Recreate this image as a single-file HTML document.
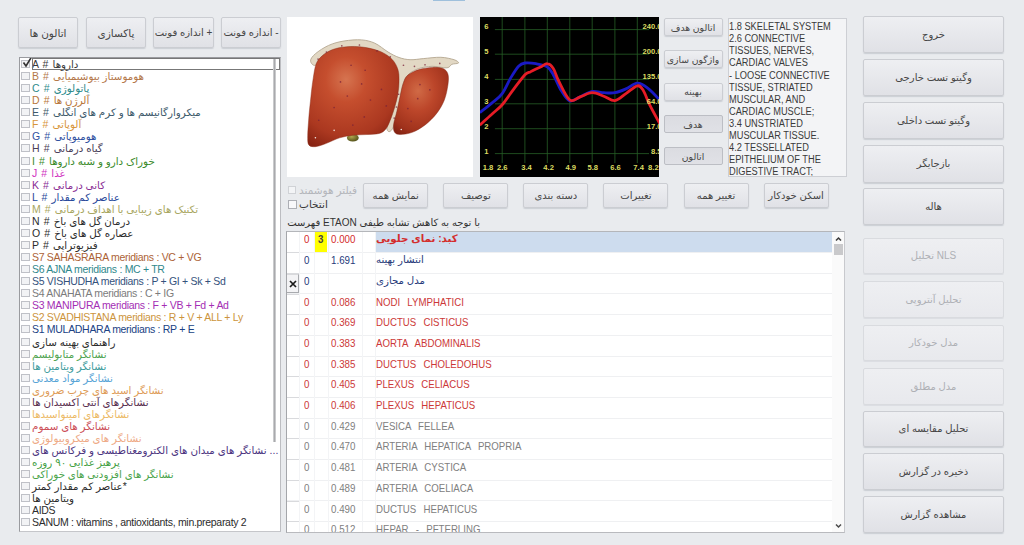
<!DOCTYPE html><html lang="fa"><head><meta charset="utf-8"><title>NLS</title><style>
*{box-sizing:border-box;margin:0;padding:0}
html,body{width:1024px;height:545px;overflow:hidden;background:#e9ebee;}
body{position:relative;font-family:"Liberation Sans","DejaVu Sans",sans-serif;font-size:11px;color:#333;}
.abs{position:absolute}
.btn{position:absolute;border:1px solid #cbcdd2;border-radius:2px;background:linear-gradient(#eeeff2 0%,#e7e8ec 50%,#e0e1e6 100%);box-shadow:0 1px 1px rgba(130,135,150,.28);display:flex;align-items:center;justify-content:center;direction:rtl;color:#464646;font-size:11px;white-space:nowrap}
.btn.dis{color:#aeb0b5;border-color:#d9dbdf;background:linear-gradient(#eeeff2,#e8e9ed);box-shadow:0 1px 0 rgba(130,135,150,.12)}
.btn.pressed{background:linear-gradient(#dbdce1,#e0e1e6);border-color:#bcbec4;box-shadow:none}
#list{position:absolute;left:19px;top:57px;width:262px;height:475px;background:#fff;border:1px solid #9a9b9f;border-right-color:#bcbdc1;border-bottom-color:#c5c6ca;overflow:hidden}
.li{position:absolute;left:0;height:12px;line-height:12px;white-space:nowrap;font-size:10.5px;width:300px}
.li i{position:absolute;left:1px;top:2px;width:9px;height:8px;border:1px solid #bfc1c7;background:#f2f3f5;display:block}
.li span{position:absolute;left:12px;top:0;letter-spacing:-0.3px}
.li span.p{letter-spacing:0;word-spacing:1.2px}
.row{left:0;width:545px;height:20.7px;border-bottom:1px solid #eff0f2;font-size:10.5px;line-height:14px;white-space:nowrap}
.row span{top:0}
.row .n{transform:scaleX(.93);transform-origin:0 0}
.row .t{white-space:pre;word-spacing:1px;transform:scaleX(.92);transform-origin:0 0}
.a{font-weight:normal;font-size:10.3px;letter-spacing:0;word-spacing:0}
</style></head><body>
<div class="abs" style="left:433px;top:0;width:32px;height:1px;background:#9fc0dc"></div>
<div class="btn" style="left:18px;top:17px;width:60px;height:31px;font-size:10.5px">اتالون ها</div>
<div class="btn" style="left:86px;top:17px;width:60px;height:31px;font-size:10.5px">پاکسازی</div>
<div class="btn" style="left:153px;top:17px;width:61px;height:31px;font-size:10px">+ اندازه فونت</div>
<div class="btn" style="left:221px;top:17px;width:60px;height:31px;font-size:10px">- اندازه فونت</div>
<div id="list">
<div class="li" style="top:0.0px;color:#3a3a3a"><i></i><svg style="position:absolute;left:2px;top:-2px" width="11" height="12" viewBox="0 0 11 12"><path d="M1.5 6.5 L4 10 L9.5 1" fill="none" stroke="#333" stroke-width="1.6"/></svg><span class="p">A # <b class="a">داروها</b></span></div>
<div class="li" style="top:12.06px;color:#b4784a"><i></i><span class="p">B # <b class="a">هوموستاز بیوشیمیایی</b></span></div>
<div class="li" style="top:24.13px;color:#2e8b8b"><i></i><span class="p">C # <b class="a">پاتولوژی</b></span></div>
<div class="li" style="top:36.2px;color:#b8763a"><i></i><span class="p">D # <b class="a">آلرژن ها</b></span></div>
<div class="li" style="top:48.26px;color:#3d5a6b"><i></i><span class="p">E # <b class="a">میکروارگانیسم ها و کرم های انگلی</b></span></div>
<div class="li" style="top:60.32px;color:#d8953a"><i></i><span class="p">F # <b class="a">آلوپاتی</b></span></div>
<div class="li" style="top:72.39px;color:#3050a0"><i></i><span class="p">G # <b class="a">هومیوپاتی</b></span></div>
<div class="li" style="top:84.45px;color:#4a4058"><i></i><span class="p">H # <b class="a">گیاه درمانی</b></span></div>
<div class="li" style="top:96.52px;color:#3a8a2a"><i></i><span class="p">I # <b class="a">خوراک دارو و شبه داروها</b></span></div>
<div class="li" style="top:108.58px;color:#d030c0"><i></i><span class="p">J # <b class="a">غذا</b></span></div>
<div class="li" style="top:120.65px;color:#8a2c94"><i></i><span class="p">K # <b class="a">کانی درمانی</b></span></div>
<div class="li" style="top:132.72px;color:#28489a"><i></i><span class="p">L # <b class="a">عناصر کم مقدار</b></span></div>
<div class="li" style="top:144.78px;color:#a8a660"><i></i><span class="p">M # <b class="a">تکنیک های زیبایی با اهداف درمانی</b></span></div>
<div class="li" style="top:156.84px;color:#2c2c2c"><i></i><span class="p">N # <b class="a">درمان گل های باخ</b></span></div>
<div class="li" style="top:168.91px;color:#2c2c2c"><i></i><span class="p">O # <b class="a">عصاره گل های باخ</b></span></div>
<div class="li" style="top:180.97px;color:#2c2c2c"><i></i><span class="p">P # <b class="a">فیزیوتراپی</b></span></div>
<div class="li" style="top:193.04px;color:#ac6236"><i></i><span>S7 SAHASRARA meridians : VC + VG</span></div>
<div class="li" style="top:205.1px;color:#30888c"><i></i><span>S6 AJNA meridians : MC + TR</span></div>
<div class="li" style="top:217.17px;color:#34527c"><i></i><span>S5 VISHUDHA meridians : P + GI + Sk + Sd</span></div>
<div class="li" style="top:229.23px;color:#7c7c7c"><i></i><span>S4 ANAHATA meridians : C + IG</span></div>
<div class="li" style="top:241.3px;color:#a42eb4"><i></i><span>S3 MANIPURA meridians : F + VB + Fd + Ad</span></div>
<div class="li" style="top:253.36px;color:#cc943c"><i></i><span>S2 SVADHISTANA meridians : R + V + ALL + Ly</span></div>
<div class="li" style="top:265.43px;color:#204284"><i></i><span>S1 MULADHARA meridians : RP + E</span></div>
<div class="li" style="top:277.5px;color:#2c2c2c"><i></i><span><b class="a">راهنمای بهینه سازی</b></span></div>
<div class="li" style="top:289.56px;color:#50a450"><i></i><span><b class="a">نشانگر متابولیسم</b></span></div>
<div class="li" style="top:301.62px;color:#409c9c"><i></i><span><b class="a">نشانگر ویتامین ها</b></span></div>
<div class="li" style="top:313.69px;color:#58a4d6"><i></i><span><b class="a">نشانگر مواد معدنی</b></span></div>
<div class="li" style="top:325.75px;color:#de9c58"><i></i><span><b class="a">نشانگر اسید های چرب ضروری</b></span></div>
<div class="li" style="top:337.82px;color:#5a3050"><i></i><span><b class="a">نشانگرهای آنتی اکسیدان ها</b></span></div>
<div class="li" style="top:349.88px;color:#ecba66"><i></i><span><b class="a">نشانگرهای آمینواسیدها</b></span></div>
<div class="li" style="top:361.95px;color:#cc5058"><i></i><span><b class="a">نشانگر های سموم</b></span></div>
<div class="li" style="top:374.01px;color:#eeaa86"><i></i><span><b class="a">نشانگر های میکروبیولوژی</b></span></div>
<div class="li" style="top:386.08px;color:#4c3480"><i></i><span><b class="a">نشانگر های میدان های الکترومغناطیسی و فرکانس های</b> ...</span></div>
<div class="li" style="top:398.14px;color:#44a044"><i></i><span><b class="a">پرهیز غذایی ۹۰ روزه</b></span></div>
<div class="li" style="top:410.21px;color:#4ca44c"><i></i><span><b class="a">نشانگر های افزودنی های خوراکی</b></span></div>
<div class="li" style="top:422.27px;color:#2c2c2c"><i></i><span><b class="a">عناصر کم مقدار کمتر</b>*</span></div>
<div class="li" style="top:434.34px;color:#2c2c2c"><i></i><span><b class="a">ویتامین ها</b></span></div>
<div class="li" style="top:446.4px;color:#2c2c2c"><i></i><span>AIDS</span></div>
<div class="li" style="top:458.47px;color:#2c2c2c"><i></i><span>SANUM : vitamins , antioxidants, min.preparaty 2</span></div>
<div class="li" style="top:470.53px;color:#2c2c2c"><i></i><span></span></div>
<div class="abs" style="left:12px;top:0;width:248px;height:12px;border:1px solid #777"></div>
<div class="abs" style="left:252.5px;top:1px;width:3px;height:383px;background:#a9aaad;border-left:.5px solid #c9cacc;border-right:.5px solid #c9cacc"></div>
</div>
<div class="abs" id="img" style="left:287px;top:17px;width:186px;height:160px;background:#fff"><svg class="abs" style="left:0;top:0" width="186" height="160" viewBox="0 0 186 160"><defs><radialGradient id="g1" cx="0.42" cy="0.33" r="0.75"><stop offset="0" stop-color="#d67450"/><stop offset="0.3" stop-color="#c54e2e"/><stop offset="0.75" stop-color="#ab3820"/><stop offset="1" stop-color="#882312"/></radialGradient><radialGradient id="g2" cx="0.45" cy="0.35" r="0.75"><stop offset="0" stop-color="#d06a46"/><stop offset="0.4" stop-color="#bc462a"/><stop offset="0.8" stop-color="#a0321c"/><stop offset="1" stop-color="#802010"/></radialGradient><radialGradient id="g3" cx="0.4" cy="0.35" r="0.7"><stop offset="0" stop-color="#b0a850"/><stop offset="1" stop-color="#4c4a14"/></radialGradient><filter id="bl" x="-5%" y="-5%" width="110%" height="110%"><feGaussianBlur stdDeviation="1.2"/></filter></defs><g transform="translate(13,13) scale(0.2201)"><path d="M48 140C48 131 56 120 70 108C84 96 108 80 130 70C152 60 175 54 200 50C225 46 257 43 280 45C303 47 320 51 340 60C360 69 382 89 400 100C418 111 433 119 450 125C467 131 482 134 500 135C518 136 537 132 560 130C583 128 617 123 640 124C663 125 687 131 700 135C713 139 722 146 720 150C718 154 699 152 690 156C681 160 683 170 668 172C653 174 621 164 600 165C579 166 558 169 540 175C522 181 507 189 495 200C483 211 477 222 470 240C463 258 460 287 455 310C450 333 445 358 440 380C435 402 431 426 425 440C419 454 410 462 405 462C400 462 392 454 395 440C398 426 412 403 420 380C428 357 436 330 440 300C444 270 452 228 445 200C438 172 424 149 400 130C376 111 333 93 300 85C267 77 232 76 200 80C168 84 132 97 110 110C88 123 80 155 70 160C60 165 48 149 48 140Z" fill="#e2d8c4" stroke="#b3a58e" stroke-width="4"/><ellipse cx="240" cy="490" rx="27" ry="17" fill="url(#g3)"/><path d="M75 150C83 132 96 121 110 110C124 99 140 91 160 85C180 79 207 76 230 75C253 74 277 76 300 80C323 84 350 91 370 100C390 109 408 122 420 135C432 148 440 164 445 180C450 196 450 212 450 230C450 248 448 270 445 290C442 310 436 330 430 350C424 370 417 393 410 410C403 427 398 440 390 450C382 460 375 466 360 470C345 474 320 474 300 475C280 476 260 476 240 478C220 480 200 484 180 490C160 496 138 508 120 515C102 522 83 529 70 530C57 531 46 530 40 522C34 514 35 500 35 480C35 460 38 430 40 400C42 370 47 330 50 300C53 270 56 245 60 220C64 195 67 168 75 150Z" fill="url(#g1)" stroke="#8a2c18" stroke-width="2"/><path d="M470 240C476 224 478 215 490 205C502 195 522 186 540 180C558 174 582 171 600 170C618 169 638 170 650 175C662 180 668 188 672 200C676 212 675 230 672 250C669 270 664 298 655 320C646 342 634 362 620 380C606 398 588 416 570 430C552 444 529 458 510 465C491 472 468 475 455 475C442 475 435 472 430 465C425 458 423 446 425 430C427 414 435 392 440 370C445 348 450 322 455 300C460 278 464 256 470 240Z" fill="url(#g2)" stroke="#832814" stroke-width="2"/><circle cx="232" cy="160" r="3.8" fill="#7a2238" opacity=".75"/><circle cx="296" cy="183" r="3.8" fill="#7a2238" opacity=".75"/><circle cx="184" cy="236" r="3.8" fill="#7a2238" opacity=".75"/><circle cx="280" cy="245" r="3.8" fill="#7a2238" opacity=".75"/><circle cx="370" cy="270" r="3.8" fill="#7a2238" opacity=".75"/><circle cx="215" cy="300" r="3.8" fill="#7a2238" opacity=".75"/><circle cx="320" cy="318" r="3.8" fill="#7a2238" opacity=".75"/><circle cx="155" cy="352" r="3.8" fill="#7a2238" opacity=".75"/><circle cx="392" cy="345" r="3.8" fill="#7a2238" opacity=".75"/><circle cx="85" cy="410" r="3.8" fill="#7a2238" opacity=".75"/><circle cx="240" cy="432" r="3.8" fill="#7a2238" opacity=".75"/><circle cx="292" cy="395" r="3.8" fill="#7a2238" opacity=".75"/><circle cx="545" cy="248" r="3.8" fill="#7a2238" opacity=".75"/><circle cx="590" cy="272" r="3.8" fill="#7a2238" opacity=".75"/><circle cx="535" cy="312" r="3.8" fill="#7a2238" opacity=".75"/><circle cx="490" cy="357" r="3.8" fill="#7a2238" opacity=".75"/><circle cx="505" cy="415" r="3.8" fill="#7a2238" opacity=".75"/><circle cx="470" cy="160" r="3.8" fill="#7a2238" opacity=".75"/><circle cx="520" cy="165" r="3.8" fill="#7a2238" opacity=".75"/><circle cx="568" cy="158" r="3.8" fill="#7a2238" opacity=".75"/><circle cx="635" cy="152" r="3.8" fill="#7a2238" opacity=".75"/><circle cx="350" cy="95" r="3.8" fill="#7a2238" opacity=".75"/><circle cx="410" cy="122" r="3.8" fill="#7a2238" opacity=".75"/><circle cx="270" cy="68" r="3.8" fill="#7a2238" opacity=".75"/><circle cx="190" cy="72" r="3.8" fill="#7a2238" opacity=".75"/><circle cx="120" cy="100" r="3.8" fill="#7a2238" opacity=".75"/><circle cx="82" cy="132" r="3.8" fill="#7a2238" opacity=".75"/><circle cx="448" cy="292" r="3.8" fill="#7a2238" opacity=".75"/><circle cx="438" cy="350" r="3.8" fill="#7a2238" opacity=".75"/><circle cx="428" cy="400" r="3.8" fill="#7a2238" opacity=".75"/><circle cx="70" cy="490" r="3.5" fill="#f4eee8"/><circle cx="155" cy="456" r="3.5" fill="#f4eee8"/><circle cx="460" cy="452" r="3.5" fill="#f4eee8"/></g></svg></div>
<div class="abs" id="chart" style="left:480px;top:17px;width:179px;height:160px;background:#000;overflow:hidden"><svg class="abs" style="left:0;top:0" width="180" height="160" viewBox="0 0 180 160" font-family="'Liberation Sans',sans-serif" font-size="7.6" font-weight="bold" fill="#dcdc62"><path d="M22.2 0V146.1M44.9 0V146.1M67.3 0V146.1M89.8 0V146.1M112.2 0V146.1M134.9 0V146.1M157.3 0V146.1M14.9 12.6H169.0M14.9 37.2H169.0M14.9 62.4H169.0M14.9 86.8H169.0M14.9 111.7H169.0M14.9 136.6H169.0" stroke="#265e26" stroke-width="0.8" fill="none"/><path d="M-0.2 95.6C1.8 94.0 8.0 89.3 11.8 86.1C15.5 83.0 19.0 80.9 22.2 76.6C25.4 72.4 28.0 65.4 30.7 60.9C33.5 56.3 36.2 51.7 38.6 49.2C41.0 46.7 42.0 46.5 44.9 46.0C47.8 45.6 52.2 46.0 56.0 46.7C59.7 47.3 64.4 48.0 67.3 49.8C70.2 51.7 71.0 53.8 73.3 57.7C75.7 61.7 78.5 69.1 81.2 73.5C84.0 77.9 86.6 82.9 89.8 83.9C92.9 85.0 96.4 81.4 100.2 79.8C103.9 78.2 108.2 75.1 112.2 74.4C116.1 73.8 120.1 75.5 123.8 75.7C127.6 75.9 131.2 76.3 134.9 75.7C138.6 75.1 142.2 73.5 145.9 71.9C149.7 70.3 153.6 66.3 157.3 66.2C161.0 66.1 164.3 68.5 168.0 71.3C171.8 74.1 177.8 81.0 179.7 83.0" stroke="#1a1ac4" stroke-width="2.8" fill="none" stroke-linejoin="round"/><path d="M-0.2 108.2C1.8 106.4 8.0 100.6 11.8 97.2C15.5 93.7 18.5 91.9 22.2 87.7C25.9 83.5 30.1 76.9 33.9 71.9C37.7 66.9 42.2 60.6 44.9 57.7C47.7 54.9 48.5 55.8 50.3 54.9C52.1 53.9 54.1 52.9 56.0 52.0C57.9 51.1 59.8 50.4 61.7 49.5C63.6 48.6 65.4 46.3 67.3 46.7C69.3 47.0 71.4 48.5 73.3 51.4C75.2 54.3 76.0 58.8 78.7 64.0C81.4 69.3 86.2 80.3 89.8 83.0C93.3 85.6 96.4 81.0 100.2 79.8C103.9 78.6 108.2 75.8 112.2 75.7C116.1 75.6 120.1 77.9 123.8 79.2C127.6 80.5 131.2 84.0 134.9 83.6C138.6 83.2 142.2 79.1 145.9 76.6C149.7 74.2 154.4 69.3 157.3 68.8C160.2 68.2 161.2 70.3 163.3 73.5C165.3 76.6 166.9 82.2 169.6 87.7C172.3 93.2 178.0 103.5 179.7 106.6" stroke="#e61c26" stroke-width="2.8" fill="none" stroke-linejoin="round"/><text x="6.4" y="12.1" text-anchor="middle">6</text><text x="6.4" y="36.7" text-anchor="middle">5</text><text x="6.4" y="62.0" text-anchor="middle">4</text><text x="6.4" y="86.6" text-anchor="middle">3</text><text x="6.4" y="111.9" text-anchor="middle">2</text><text x="6.4" y="136.8" text-anchor="middle">1</text><text x="181.5" y="12.1" text-anchor="end">240.0</text><text x="181.5" y="37.4" text-anchor="end">200.0</text><text x="181.5" y="62.0" text-anchor="end">135.0</text><text x="181.5" y="86.6" text-anchor="end">64.0</text><text x="181.5" y="111.9" text-anchor="end">17.0</text><text x="181.5" y="136.8" text-anchor="end">8.5</text><text x="8.0" y="152.6" text-anchor="middle">1.8</text><text x="22.2" y="152.6" text-anchor="middle">2.6</text><text x="46.5" y="152.6" text-anchor="middle">3.4</text><text x="68.6" y="152.6" text-anchor="middle">4.2</text><text x="90.7" y="152.6" text-anchor="middle">4.9</text><text x="112.8" y="152.6" text-anchor="middle">5.8</text><text x="135.5" y="152.6" text-anchor="middle">6.6</text><text x="158.6" y="152.6" text-anchor="middle">7.4</text><text x="173.4" y="152.6" text-anchor="middle">8.2</text></svg></div>
<div class="btn" style="left:663.5px;top:18px;width:59px;height:18px;font-size:9.3px">اتالون هدف</div>
<div class="btn" style="left:663.5px;top:50px;width:59px;height:18px;font-size:9.3px">واژگون سازی</div>
<div class="btn" style="left:663.5px;top:82.5px;width:59px;height:18px;font-size:9.3px">بهینه</div>
<div class="btn pressed" style="left:663.5px;top:115px;width:59px;height:18px;font-size:9.3px">هدف</div>
<div class="btn pressed" style="left:663.5px;top:147px;width:59px;height:18px;font-size:9.3px">اتالون</div>
<div class="abs" id="tb" style="left:727.5px;top:17.5px;width:119px;height:159.5px;background:#f3f4f6;border:1px solid #cdcfd4;line-height:12.07px;font-size:10px;color:#3a3a3a;white-space:nowrap;overflow:hidden"><div style="position:absolute;left:0.5px;top:2.8px;transform:scaleX(.925);transform-origin:0 0">1.8 SKELETAL SYSTEM<br>2.6 CONNECTIVE<br>TISSUES, NERVES,<br>CARDIAC VALVES<br>- LOOSE CONNECTIVE<br>TISSUE, STRIATED<br>MUSCULAR, AND<br>CARDIAC MUSCLE;<br>3.4 UNSTRIATED<br>MUSCULAR TISSUE.<br>4.2 TESSELLATED<br>EPITHELIUM OF THE<br>DIGESTIVE TRACT;</div></div>
<div class="btn" style="left:863px;top:16px;width:141px;height:36.5px;font-size:10px">خروج</div>
<div class="btn" style="left:863px;top:59px;width:141px;height:37px;font-size:10px">وگیتو تست خارجی</div>
<div class="btn" style="left:863px;top:101.5px;width:141px;height:37px;font-size:10px">وگیتو تست داخلی</div>
<div class="btn" style="left:863px;top:144.5px;width:141px;height:38.5px;font-size:10px">بازجایگر</div>
<div class="btn" style="left:863px;top:187.5px;width:141px;height:37px;font-size:10px">هاله</div>
<div class="btn dis" style="left:863px;top:237.5px;width:141px;height:36.5px;font-size:10px">NLS تحلیل</div>
<div class="btn dis" style="left:863px;top:280.5px;width:141px;height:37.3px;font-size:10px">تحلیل آنتروپی</div>
<div class="btn dis" style="left:863px;top:324.5px;width:141px;height:36.5px;font-size:10px">مدل خودکار</div>
<div class="btn dis" style="left:863px;top:367.5px;width:141px;height:37px;font-size:10px">مدل مطلق</div>
<div class="btn" style="left:863px;top:410.5px;width:141px;height:36.5px;font-size:10px">تحلیل مقایسه ای</div>
<div class="btn" style="left:863px;top:453px;width:141px;height:36.5px;font-size:10px">ذخیره در گزارش</div>
<div class="btn" style="left:863px;top:495.5px;width:141px;height:37px;font-size:10px">مشاهده گزارش</div>
<div class="btn" style="left:363.2px;top:183px;width:65px;height:24.5px;font-size:10px">نمایش همه</div>
<div class="btn" style="left:443.3px;top:183px;width:65px;height:24.5px;font-size:10px">توصیف</div>
<div class="btn" style="left:523.4px;top:183px;width:65px;height:24.5px;font-size:10px">دسته بندی</div>
<div class="btn" style="left:603.4px;top:183px;width:65px;height:24.5px;font-size:10px">تغییرات</div>
<div class="btn" style="left:683.5px;top:183px;width:65px;height:24.5px;font-size:10px">تغییر همه</div>
<div class="btn" style="left:763.6px;top:183px;width:65px;height:24.5px;font-size:10px">اسکن خودکار</div>
<div class="abs" style="left:288px;top:186px;width:8px;height:8px;border:1px solid #d0d2d6;background:#f3f4f6"></div>
<div class="abs" style="left:299px;top:184px;line-height:12px;font-size:10.5px;color:#b4b6bb;white-space:nowrap">فیلتر هوشمند</div>
<div class="abs" style="left:288px;top:199.5px;width:9px;height:9px;border:1px solid #adafb5;background:#f8f8fa"></div>
<div class="abs" style="left:299px;top:198px;line-height:12px;font-size:10.5px;color:#3a3a3a;white-space:nowrap">انتخاب</div>
<div class="abs" id="lbl" style="left:280px;top:216px;width:200px;line-height:13px;font-size:10px;color:#333;white-space:nowrap;direction:rtl;text-align:right">با توجه به کاهش تشابه طیفی ETAON فهرست</div>
<div class="abs" id="tbl" style="left:286px;top:231px;width:559px;height:302px;background:#fff;border:1px solid #a4a6aa;border-right-color:#c8c9cd;border-top-color:#b4b6ba;border-bottom-color:#b9babe;overflow:hidden">
<div class="abs row" style="top:0.4px;color:#d42c2c">
<div class="abs" style="left:89px;top:0;width:456px;height:20px;background:#cddcee"></div>
<div class="abs" style="left:27.5px;top:0;width:12.5px;height:20px;background:#ffff00"></div>
<span class="abs n" style="left:16.5px">0</span>
<span class="abs n" style="left:31px;color:#444;font-weight:bold">3</span>
<span class="abs n" style="left:44px">0.000</span>
<span class="abs" style="left:89px;font-weight:bold;font-size:10.3px;">کبد: نمای جلویی</span>
</div>
<div class="abs row" style="top:21.1px;color:#263a7a">
<span class="abs n" style="left:16.5px">0</span>
<span class="abs n" style="left:44px">1.691</span>
<span class="abs" style="left:89px;font-size:10.2px;">انتشار بهینه</span>
</div>
<div class="abs row" style="top:41.8px;color:#263a7a">
<span class="abs n" style="left:16.5px">0</span>
<span class="abs" style="left:89px;font-size:10.2px;">مدل مجازی</span>
</div>
<div class="abs row" style="top:62.5px;color:#cc3838">
<span class="abs n" style="left:16.5px">0</span>
<span class="abs n" style="left:44px">0.086</span>
<span class="abs t" style="left:89px">NODI  LYMPHATICI</span>
</div>
<div class="abs row" style="top:83.2px;color:#cc3838">
<span class="abs n" style="left:16.5px">0</span>
<span class="abs n" style="left:44px">0.369</span>
<span class="abs t" style="left:89px">DUCTUS  CISTICUS</span>
</div>
<div class="abs row" style="top:103.9px;color:#cc3838">
<span class="abs n" style="left:16.5px">0</span>
<span class="abs n" style="left:44px">0.383</span>
<span class="abs t" style="left:89px">AORTA  ABDOMINALIS</span>
</div>
<div class="abs row" style="top:124.6px;color:#cc3838">
<span class="abs n" style="left:16.5px">0</span>
<span class="abs n" style="left:44px">0.385</span>
<span class="abs t" style="left:89px">DUCTUS  CHOLEDOHUS</span>
</div>
<div class="abs row" style="top:145.3px;color:#cc3838">
<span class="abs n" style="left:16.5px">0</span>
<span class="abs n" style="left:44px">0.405</span>
<span class="abs t" style="left:89px">PLEXUS  CELIACUS</span>
</div>
<div class="abs row" style="top:166.0px;color:#cc3838">
<span class="abs n" style="left:16.5px">0</span>
<span class="abs n" style="left:44px">0.406</span>
<span class="abs t" style="left:89px">PLEXUS  HEPATICUS</span>
</div>
<div class="abs row" style="top:186.7px;color:#808080">
<span class="abs n" style="left:16.5px">0</span>
<span class="abs n" style="left:44px">0.429</span>
<span class="abs t" style="left:89px">VESICA  FELLEA</span>
</div>
<div class="abs row" style="top:207.4px;color:#808080">
<span class="abs n" style="left:16.5px">0</span>
<span class="abs n" style="left:44px">0.470</span>
<span class="abs t" style="left:89px">ARTERIA  HEPATICA  PROPRIA</span>
</div>
<div class="abs row" style="top:228.1px;color:#808080">
<span class="abs n" style="left:16.5px">0</span>
<span class="abs n" style="left:44px">0.481</span>
<span class="abs t" style="left:89px">ARTERIA  CYSTICA</span>
</div>
<div class="abs row" style="top:248.8px;color:#808080">
<span class="abs n" style="left:16.5px">0</span>
<span class="abs n" style="left:44px">0.489</span>
<span class="abs t" style="left:89px">ARTERIA  COELIACA</span>
</div>
<div class="abs row" style="top:269.5px;color:#808080">
<span class="abs n" style="left:16.5px">0</span>
<span class="abs n" style="left:44px">0.490</span>
<span class="abs t" style="left:89px">DUCTUS  HEPATICUS</span>
</div>
<div class="abs row" style="top:290.2px;color:#808080">
<span class="abs n" style="left:16.5px">0</span>
<span class="abs n" style="left:44px">0.512</span>
<span class="abs t" style="left:89px">HEPAR  -  PFTERLING</span>
</div>
<div class="abs" style="left:12px;top:0;width:1px;height:300px;background:#f3f4f6"></div>
<div class="abs" style="left:27px;top:0;width:1px;height:300px;background:#f3f4f6"></div>
<div class="abs" style="left:41px;top:0;width:1px;height:300px;background:#f3f4f6"></div>
<div class="abs" style="left:75px;top:0;width:1px;height:300px;background:#f3f4f6"></div>
<div class="abs" style="left:88px;top:0;width:1px;height:300px;background:#f3f4f6"></div>
<div class="abs" style="left:0;top:20.1px;width:12px;height:1px;background:#d9dadd"></div>
<div class="abs" style="left:0;top:40.8px;width:12px;height:1px;background:#d9dadd"></div>
<div class="abs" style="left:0;top:61.5px;width:12px;height:1px;background:#d9dadd"></div>
<div class="abs" style="left:0;top:82.2px;width:12px;height:1px;background:#d9dadd"></div>
<div class="abs" style="left:0;top:102.9px;width:12px;height:1px;background:#d9dadd"></div>
<div class="abs" style="left:0;top:123.6px;width:12px;height:1px;background:#d9dadd"></div>
<div class="abs" style="left:0;top:144.3px;width:12px;height:1px;background:#d9dadd"></div>
<div class="abs" style="left:0;top:165.0px;width:12px;height:1px;background:#d9dadd"></div>
<div class="abs" style="left:0;top:185.7px;width:12px;height:1px;background:#d9dadd"></div>
<div class="abs" style="left:0;top:206.4px;width:12px;height:1px;background:#d9dadd"></div>
<div class="abs" style="left:0;top:227.1px;width:12px;height:1px;background:#d9dadd"></div>
<div class="abs" style="left:0;top:247.8px;width:12px;height:1px;background:#d9dadd"></div>
<div class="abs" style="left:0;top:268.5px;width:12px;height:1px;background:#d9dadd"></div>
<div class="abs" style="left:0;top:289.2px;width:12px;height:1px;background:#d9dadd"></div>
<div class="abs" style="left:0;top:42px;width:12px;height:18.5px;border:1px solid #a8aaae;border-left:0;border-top-color:#d8d9dc;background:#f3f3f5"></div>
<svg class="abs" style="left:2px;top:48px" width="8" height="8" viewBox="0 0 8 8"><path d="M1 1L7 7M7 1L1 7" stroke="#1a1a1a" stroke-width="1.7"/></svg>
<div class="abs" style="left:545px;top:0;width:12px;height:300px;background:#fafafa"></div>
<div class="abs" style="left:547px;top:12px;width:9px;height:11px;background:#c9c9cb"></div>
<svg class="abs" style="left:548px;top:4px" width="7" height="6" viewBox="0 0 7 6"><path d="M1 4.5 L3.5 2 L6 4.5" fill="none" stroke="#3a3a3a" stroke-width="1.5"/></svg>
<svg class="abs" style="left:548px;top:291px" width="7" height="6" viewBox="0 0 7 6"><path d="M1 1.5 L3.5 4 L6 1.5" fill="none" stroke="#4a4a4a" stroke-width="1.5"/></svg>
</div>
</body></html>
